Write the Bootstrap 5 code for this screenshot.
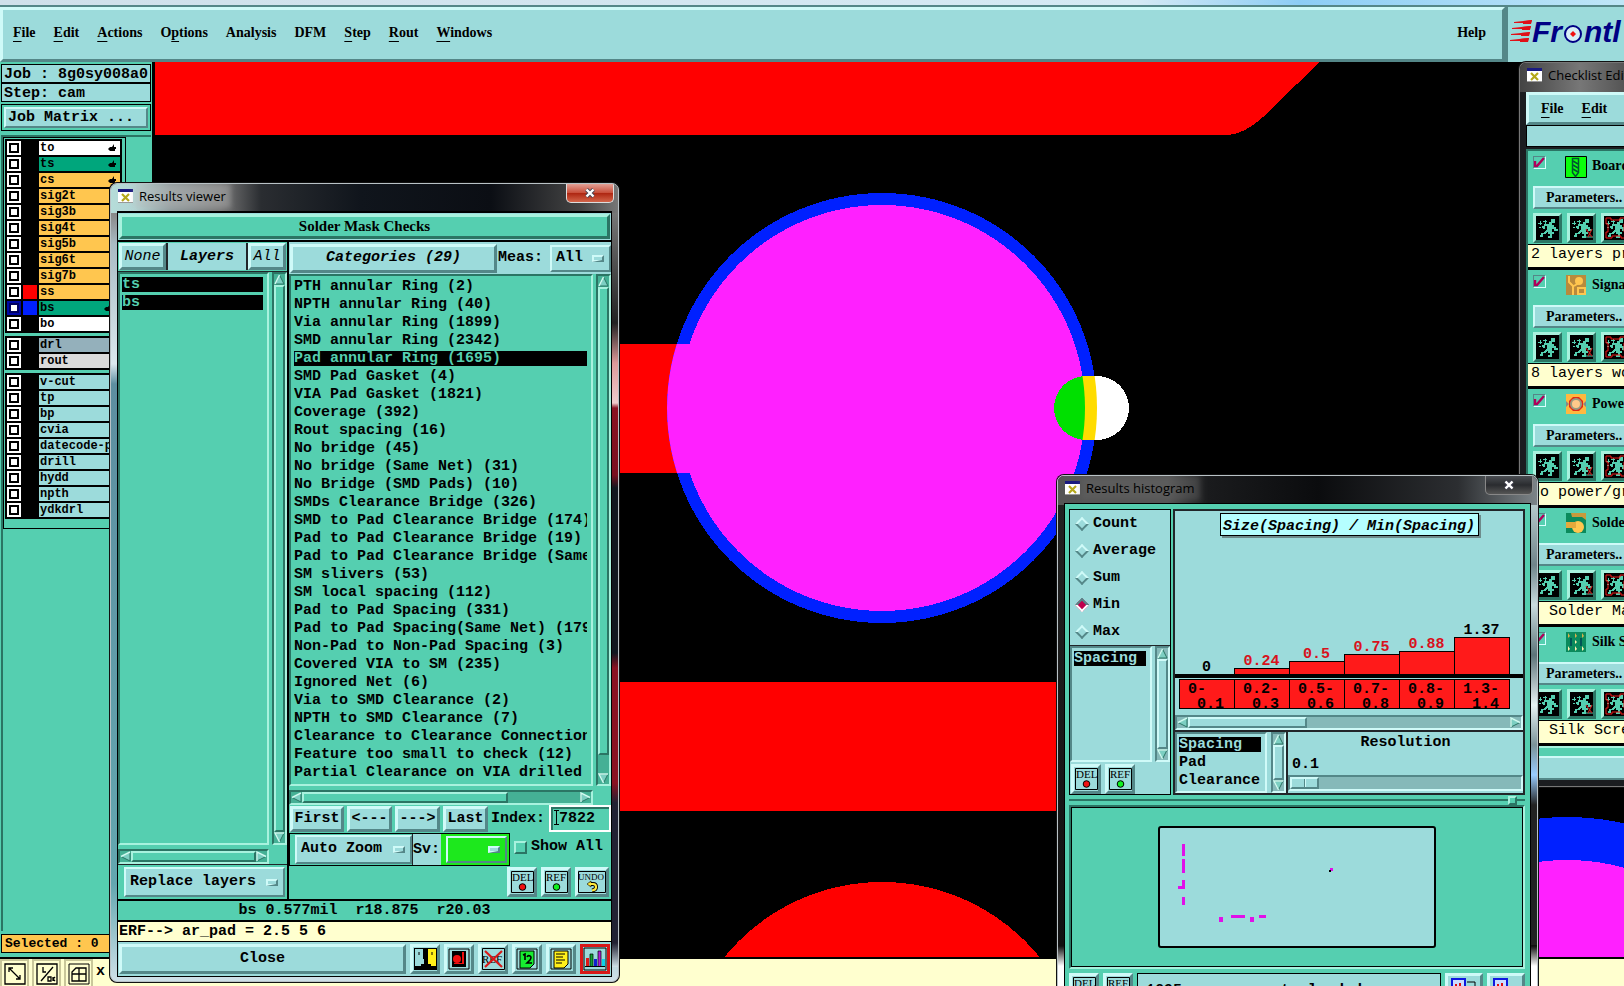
<!DOCTYPE html>
<html lang="en">
<head>
<meta charset="utf-8">
<title>CAM Graphic Editor</title>
<link rel="stylesheet" href="https://cdn.jsdelivr.net/npm/bootstrap@5.3.0/dist/css/bootstrap.min.css">
<script src="https://cdn.jsdelivr.net/npm/bootstrap@5.3.0/dist/js/bootstrap.bundle.min.js"></script>
<style>
:root{--teal:#55cfb0;--teal-l:#a8f2de;--teal-d:#2b7564;--aqua:#9cdbdb;--aqua-l:#cffaf8;--aqua-d:#548788;--cream:#ffffcf;--amber:#ffc64f}
body{font:bold 15px/18px "Liberation Mono",monospace;color:#000;background:#000}
ul{list-style:none;margin:0;padding:0}
button,select,input{font:inherit;color:inherit;border-radius:0;padding:0;margin:0}
a{color:inherit;text-decoration:none}
.serif{font:bold 14px/20px "Liberation Serif",serif}
.teal{background:var(--teal)} .aqua{background:var(--aqua)} .cream{background:var(--cream)}
.up{background:var(--aqua);border:3px solid;border-color:var(--aqua-l) var(--aqua-d) var(--aqua-d) var(--aqua-l)}
.up-thin{background:var(--aqua);border:2px solid;border-color:var(--aqua-l) var(--aqua-d) var(--aqua-d) var(--aqua-l)}
.up-teal{background:var(--teal);border:2px solid;border-color:var(--teal-l) var(--teal-d) var(--teal-d) var(--teal-l)}
.down-teal{background:var(--teal);border:2px solid;border-color:var(--teal-d) var(--teal-l) var(--teal-l) var(--teal-d)}
.down-aqua{background:var(--aqua);border:2px solid;border-color:var(--aqua-d) var(--aqua-l) var(--aqua-l) var(--aqua-d)}
.line{border:1px solid #000}
.mi{display:inline-block}
.mi::first-letter{text-decoration:underline;text-underline-offset:4px}
.menubar u{text-underline-offset:4px}
/* main bar */
.skybar{height:5px;background:linear-gradient(90deg,#cfe0ea,#d5eaf4 70%,#8ccdf5 80%,#bfe6f7)}
.topbar{height:57px;background:#dff7f5;border-top:2px solid var(--aqua-d)}
.menubar{gap:18px;padding:0 16px 3px 10px}
.logo-box{width:119px;padding:0 0 6px 2px;border-left:3px solid var(--aqua-d)}
.logo-text{font:italic bold 30px/30px "Liberation Sans",sans-serif;color:#000084}
/* side */
.side{width:154px;border-right:2px solid #000;padding:2px 1px 0}
.job{height:19px;padding-left:2px;line-height:19px;white-space:nowrap}
.matrix{height:27px;padding:2px;margin-top:2px}
.matrix button{padding-left:2px}
.layerarea{margin:4px 0 0;border-left:2px solid var(--teal-d);border-top:2px solid var(--teal-d)}
.layerframe{width:123px;padding:1px 3px 9px 1px;border:1px solid #000}
.grp{background:#000;padding:2px 2px 0;margin-bottom:3px}
.lrow{height:16px;padding-bottom:2px;font-size:12px;line-height:14px}
.lrow input{appearance:none;width:14px;height:14px;background:#fff;border:2px solid #fff;outline:0;box-shadow:inset 0 0 0 2px #000;flex:none}
.lrow input.on{border-color:#0008a8;box-shadow:inset 0 0 0 2px #000060}
.sw{width:14px;margin:0 2px;flex:none}
.lname{padding-left:1px;overflow:hidden;white-space:nowrap}
.c-w{background:#fff}.c-g{background:#00a67c}.c-o{background:var(--amber)}.c-d{background:#94b0bb}.c-r{background:#dadada}.c-a{background:var(--aqua)}
.sw-red{background:#f00}.sw-blue{background:#0020ff}
.selbox{height:19px;background:var(--amber);font-size:13px;line-height:17px;margin:3px 0 4px;padding-left:3px}
.footbar{height:29px;border-top:2px solid #000;gap:3px}
.fbtn{width:29px;height:29px;background:var(--cream);border:2px solid #c9c79a;padding:0}
/* windows */
.win{position:absolute;border:1px solid #b9c2c6;border-radius:7px;padding:0 6px 6px;overflow:hidden;box-shadow:0 0 0 1px #111}
.wtitle{height:27px;font:13px/24px "Open Sans",sans-serif;padding:0 0 3px 1px;gap:6px;white-space:nowrap}
.glow-l{background:#bbb6;box-shadow:0 0 5px 5px #bbb6;line-height:14px}
.glow-d{background:#6666;box-shadow:0 0 5px 5px #6666;line-height:14px}
.wclose{position:absolute;top:0;right:4px;width:48px;height:19px;border:1px solid #ddd;border-top:0;border-radius:0 0 5px 5px}
.wclose.hot{background:linear-gradient(#e3a095,#c9503c 48%,#ad2410 50%,#d3654a)}
.wclose.cold{background:linear-gradient(#4a4d52,#2a2c2f 50%,#555);border-color:#888}
.w-res{left:110px;top:183px;width:509px;height:799px;padding-bottom:4px;background:linear-gradient(180deg,transparent 30px,#a9bbc4 60px,#dbe8ee 180px,#5d8ea0 200px,#63a7b0 700px,#cfe0e8),#888}
.glass{position:absolute;left:0;right:0;top:0;height:29px}
.w-res .glass{background:linear-gradient(90deg,#b5dcd9 0,#b3d5d4 24px,#8f9a9c 60px,#777 110px,#2a2d31 150px,#10151c 250px,#0b0e14 380px,#444 470px,#777)}
.w-res .rside{position:absolute;right:0;top:29px;width:6px;bottom:14px;background:linear-gradient(180deg,#777,#222 110px,#d99 150px,#ecc 190px,#8a1322 195px,#7a1020 262px,#111820 275px,#111820 440px,#8a1322 455px,#8a1322 570px,#223 590px,#223 730px,#cfe0e8)}
.w-his{left:1057px;top:475px;width:481px;height:530px;background:linear-gradient(180deg,#222 0,#111 470px,#fff 490px)}
.w-his .glass{background:linear-gradient(90deg,#555,#555 110px,#1a1b1d 150px,#0b0c0e 260px,#2c2e31 400px,#7c8488)}
.w-his .rside{position:absolute;right:0;top:29px;width:6px;height:440px;background:linear-gradient(180deg,#b6cacb,#70848a 60px,#c9dcdf 100px,#5d7479 150px,#e8f2f4 200px,#7b9398 240px,#9cf 270px,#222 300px)}
.w-chk{left:1519px;top:62px;right:0;height:725px;background:#1b1d20;border-color:#777;border-right:0;border-radius:7px 0 0 0;padding-right:0}
.w-chk .glass{background:linear-gradient(90deg,#444,#777 60px,#555)}
.body-res{border:1px solid #000;border-top-width:2px}
.vhead{height:25px;border-width:3px;font-size:15px;line-height:18px}
.sbv{width:15px;border:2px solid;background:#45b095;border-color:var(--teal-d) var(--teal-l) var(--teal-l) var(--teal-d)}
.sbh{height:15px;border:2px solid;background:#45b095;border-color:var(--teal-d) var(--teal-l) var(--teal-l) var(--teal-d)}
.sbv.aq,.sbh.aq{background:#85b9b9;border-color:var(--aqua-d) var(--aqua-l) var(--aqua-l) var(--aqua-d)}
.aq .up-teal{background:var(--aqua);border-color:var(--aqua-l) var(--aqua-d) var(--aqua-d) var(--aqua-l)}
.cap{flex:none;width:11px;height:11px;display:block}
.catlist li,.laylist li{height:18px;white-space:pre;overflow:hidden;line-height:18px}
.catlist{padding:2px 4px 0 3px}
.laylist{padding:2px 4px 0 2px}
li.pick{color:var(--teal);background:linear-gradient(#000,#000) 0 1px/100% 15px no-repeat}
.aquapick li.pick{color:var(--aqua)}
.opt{appearance:none;background:var(--aqua) url("data:image/svg+xml,%3Csvg xmlns='http://www.w3.org/2000/svg' width='12' height='7'%3E%3Cpath d='M0 0h12v7H0z' fill='%23548788'/%3E%3Cpath d='M0 0h12l-2 2v3L0 7z' fill='%23cffaf8'/%3E%3Cpath d='M2 2h8v3H2z' fill='%239cdbdb'/%3E%3C/svg%3E") no-repeat right 5px center;border:2px solid;border-color:var(--aqua-l) var(--aqua-d) var(--aqua-d) var(--aqua-l);outline:0}
.opt.grn{background-color:#1de81d}
.svgreen{background:#1de81d;padding:2px 2px 2px 5px}
.ib{width:30px;height:30px;flex:none;display:flex;align-items:center;justify-content:center}
.ib svg{display:block;flex:none}
.ib text{font:11px "Liberation Serif",serif}
.tb{height:26px;white-space:nowrap;line-height:18px;flex:none;width:45px}
.idx{width:62px;height:27px;border:2px solid #fff;background:var(--teal);box-shadow:inset 2px 2px 0 var(--teal-d);padding-left:8px}
.showall{appearance:none;width:13px;height:13px}
/* histogram */
.rad{height:27px;gap:6px}
.rad input{appearance:none;width:10px;height:10px;margin:0 0 0 3px;transform:rotate(45deg);border:2px solid;border-color:var(--aqua-l) var(--aqua-d) var(--aqua-d) var(--aqua-l);background:var(--aqua)}
.rad input:checked{background:#c0004c;border-color:var(--aqua-d) #fff #fff var(--aqua-d)}
.hist{grid-template-columns:repeat(6,1fr);margin:0 14px 0 4px}
.bar{background:#ff1a1a;border:1px solid #000;border-bottom:0;margin-right:-1px}
.rng{background:#ff1a1a;border:1px solid #000;margin-right:-1px;height:30px;padding:2px 0 0 8px;line-height:15px;white-space:pre}
.val{text-align:center;line-height:10px;padding-bottom:1px}
.base{height:4px;background:#000;margin-bottom:1px}
.red{color:#d8121c}
.hint{width:259px;height:23px;margin:2px auto 0;background:#b5ffff;border:1px solid #000;box-shadow:2px 2px 0 #6e8c8c;font-style:italic;text-align:center;line-height:25px;white-space:nowrap}
.sld{appearance:none;display:block;width:100%;height:16px;background:#85b9b9;border:2px solid;border-color:var(--aqua-d) var(--aqua-l) var(--aqua-l) var(--aqua-d)}
.sld::-webkit-slider-thumb{appearance:none;width:29px;height:12px;background:linear-gradient(90deg,transparent 12px,#548788 12px 13px,#cffaf8 13px 14px,transparent 14px),var(--aqua);border:2px solid;border-color:var(--aqua-l) var(--aqua-d) var(--aqua-d) var(--aqua-l)}
.sash{height:10px}
.sash div:not(.up-teal){height:2px;background:#2b7564}
.sash .up-teal{width:9px;height:9px}
/* checklist */
.cmenu{height:33px;gap:18px;padding-left:12px;border-right:0;margin-top:2px}
.clist{margin-top:2px}
.sec{height:119px;border-bottom:3px solid #000;padding-left:5px;overflow:hidden}
.shead{height:35px;padding-top:5px}
.shead svg{margin:0 5px 0 19px;flex:none}
.shead label{white-space:nowrap}
.tick{appearance:none;width:13px;height:13px;flex:none;border:1px solid;border-color:var(--aqua-d) #d9ffff #d9ffff var(--aqua-d);background:url("data:image/svg+xml,%3Csvg xmlns='http://www.w3.org/2000/svg' width='11' height='11'%3E%3Cpath d='M1 4v5h2L10 1' fill='none' stroke='%23b0005a' stroke-width='2.4'/%3E%3C/svg%3E") no-repeat center}
.par{height:23px;width:100%;border-right:0;padding-left:11px;text-align:left;line-height:18px;display:block;white-space:nowrap;overflow:hidden}
.runs{gap:5px;padding:4px 0 1px}
.run{width:29px;height:30px;flex:none;border:3px solid;border-color:var(--teal-l) var(--teal-d) var(--teal-d) var(--teal-l);background:#000;padding:0;display:flex;align-items:center;justify-content:center}
.note{height:23px;border-top:1px solid #000;background:var(--cream);font:normal 15px/20px "Liberation Mono",monospace;padding-left:3px;margin-left:-5px;white-space:pre}
</style>
</head>
<body class="vh-100 overflow-hidden position-relative d-flex flex-column">
<svg width="0" height="0" class="position-absolute">
  <symbol id="x-app" viewBox="0 0 15 14"><path d="M0 0h15v14H0z" fill="#fff"/><path d="M0 0h15v3H0z" fill="#1a1a80"/><path d="M4 5l7 7M11 5l-7 7" stroke="#b5a81c" stroke-width="2.2"/><path d="M0 13.500h15" stroke="#999"/></symbol>
  <symbol id="x-close" viewBox="0 0 12 10"><path d="M2.500 1.500l7 7M9.500 1.500l-7 7" stroke="#445" stroke-width="4"/><path d="M2.500 1.500l7 7M9.500 1.500l-7 7" stroke="#fff" stroke-width="2.400"/></symbol>
  <symbol id="a-up" viewBox="0 0 11 11"><path d="M5.500 1L1 10h9z" fill="#7ccfc2" stroke="#2b7564"/><path d="M5.500 1L1 10" stroke="#cffaf0" stroke-width="1.500"/></symbol>
  <symbol id="a-dn" viewBox="0 0 11 11"><path d="M5.500 10L1 1h9z" fill="#7ccfc2" stroke="#2b7564"/><path d="M10 1H1l4.500 9" stroke="#cffaf0" stroke-width="1.500" fill="none"/></symbol>
  <symbol id="a-lt" viewBox="0 0 11 11"><path d="M1 5.500L10 1v9z" fill="#7ccfc2" stroke="#2b7564"/><path d="M1 5.500L10 1" stroke="#cffaf0" stroke-width="1.500"/></symbol>
  <symbol id="a-rt" viewBox="0 0 11 11"><path d="M10 5.500L1 1v9z" fill="#7ccfc2" stroke="#2b7564"/><path d="M1 10V1l9 4.500" stroke="#cffaf0" stroke-width="1.500" fill="none"/></symbol>
  <symbol id="hand" viewBox="0 0 8 8"><path d="M0 5l2-2h2l2-3v3h2v2H7v2H2z"/></symbol>
  <symbol id="runner" viewBox="0 0 22 22" shape-rendering="crispEdges"><path d="M0 0h22v22H0z"/><path d="M14 2h4v4h-3v2h2v2h2v2h2v2h-4v-2h-2v3h2v2h-2v4h-4v-2h2v-2h-2v-3l-3 3H6v3H3v-2h1v-2h3l3-4V9H8v3H6v-1H5V9h2V7h5V5h2z" fill="#55cfb0"/><path d="M1 6h4M3 4v4M6 4.500h4M8 3v4M2 10h2" stroke="#55cfb0" fill="none"/></symbol>
  <symbol id="runner-x" viewBox="0 0 22 22"><use href="#runner"/><path d="M14 20h8" stroke="#55cfb0"/><path d="M15 12l6 8M21 12l-4 8" stroke="#c02020" stroke-width="1.200"/></symbol>
  <symbol id="runner-f" viewBox="0 0 22 22"><use href="#runner"/><path d="M1 1h5v2h9V1h6v6h-2v8h2v6h-5v-2H7v2H1v-6h2V7H1z" stroke="#f01818" fill="none"/></symbol>
  <symbol id="drill" viewBox="0 0 22 22"><path d="M.5.500h21v21H.5z" fill="#0cff0c" stroke="#000"/><path d="M7.500 2.500h6v14l-3 4-3-4z" fill="none" stroke="#053" stroke-width="1.500"/><path d="M8 5l5 3M8 9l5 3M8 13l5 3" stroke="#053" stroke-width="1.500"/></symbol>
</svg>

<div class="skybar flex-shrink-0"></div>
<header class="topbar d-flex flex-shrink-0">
  <nav class="menubar up serif d-flex align-items-center flex-grow-1">
    <a class="mi" href="#">File</a><a class="mi" href="#">Edit</a><a class="mi" href="#">Actions</a><a href="#">O<u>p</u>tions</a><a href="#">Analysis</a><a href="#">DFM</a><a class="mi" href="#">Step</a><a class="mi" href="#">Rout</a><a class="mi" href="#">Windows</a><a class="ms-auto" href="#">Help</a>
  </nav>
  <div class="logo-box aqua d-flex align-items-center overflow-hidden">
    <svg class="flex-shrink-0" width="22" height="24" viewBox="0 0 22 24"><path d="M22 0L4 2v1h17zM21 6L2 8v1h18zM20 12L1 14v1h18zM19 18L0 20v1h18z" fill="#e01018"/><path d="M22 0l-9 1v3h8zM21 6l-9 1v3h8zM20 12l-9 1v3h8zM19 18l-9 1v3h8z" fill="#e01018"/></svg><span class="logo-text">Fr</span><svg class="flex-shrink-0" width="22" height="22" viewBox="0 0 22 22"><circle cx="11" cy="13" r="8" fill="#d7eef5" stroke="#000084" stroke-width="2"/><path d="M11 10l3 3-3 3-3-3z" fill="#f01010"/></svg><span class="logo-text">ntl</span>
  </div>
</header>

<main class="d-flex flex-grow-1">
  <aside class="side teal d-flex flex-column flex-shrink-0">
    <div class="line aqua job">Job : 8g0sy008a0</div>
    <div class="line aqua job">Step: cam</div>
    <div class="line matrix"><button class="up-thin w-100 h-100 text-start d-block">Job Matrix ...</button></div>
    <div class="layerarea flex-grow-1">
      <div class="layerframe">
        <div class="grp">
          <label class="lrow d-flex"><input type="checkbox"><span class="sw"></span><span class="lname c-w flex-grow-1 d-flex justify-content-between align-items-center">to<svg width="8" height="8" class="me-1"><use href="#hand"/></svg></span></label>
          <label class="lrow d-flex"><input type="checkbox"><span class="sw"></span><span class="lname c-g flex-grow-1 d-flex justify-content-between align-items-center">ts<svg width="8" height="8" class="me-1"><use href="#hand"/></svg></span></label>
          <label class="lrow d-flex"><input type="checkbox"><span class="sw"></span><span class="lname c-o flex-grow-1 d-flex justify-content-between align-items-center">cs<svg width="8" height="8" class="me-1"><use href="#hand"/></svg></span></label>
          <label class="lrow d-flex"><input type="checkbox"><span class="sw"></span><span class="lname c-o flex-grow-1">sig2t</span></label>
          <label class="lrow d-flex"><input type="checkbox"><span class="sw"></span><span class="lname c-o flex-grow-1">sig3b</span></label>
          <label class="lrow d-flex"><input type="checkbox"><span class="sw"></span><span class="lname c-o flex-grow-1">sig4t</span></label>
          <label class="lrow d-flex"><input type="checkbox"><span class="sw"></span><span class="lname c-o flex-grow-1">sig5b</span></label>
          <label class="lrow d-flex"><input type="checkbox"><span class="sw"></span><span class="lname c-o flex-grow-1">sig6t</span></label>
          <label class="lrow d-flex"><input type="checkbox"><span class="sw"></span><span class="lname c-o flex-grow-1">sig7b</span></label>
          <label class="lrow d-flex"><input type="checkbox"><span class="sw sw-red"></span><span class="lname c-o flex-grow-1">ss</span></label>
          <label class="lrow d-flex"><input type="checkbox" class="on" checked><span class="sw sw-blue"></span><span class="lname c-g flex-grow-1 d-flex justify-content-between align-items-center">bs<svg width="8" height="8" class="me-2"><use href="#hand"/></svg></span></label>
          <label class="lrow d-flex"><input type="checkbox"><span class="sw"></span><span class="lname c-w flex-grow-1">bo</span></label>
        </div>
        <div class="grp">
          <label class="lrow d-flex"><input type="checkbox"><span class="sw"></span><span class="lname c-d flex-grow-1">drl</span></label>
          <label class="lrow d-flex"><input type="checkbox"><span class="sw"></span><span class="lname c-r flex-grow-1">rout</span></label>
        </div>
        <div class="grp mb-0">
          <label class="lrow d-flex"><input type="checkbox"><span class="sw"></span><span class="lname c-a flex-grow-1">v-cut</span></label>
          <label class="lrow d-flex"><input type="checkbox"><span class="sw"></span><span class="lname c-a flex-grow-1">tp</span></label>
          <label class="lrow d-flex"><input type="checkbox"><span class="sw"></span><span class="lname c-a flex-grow-1">bp</span></label>
          <label class="lrow d-flex"><input type="checkbox"><span class="sw"></span><span class="lname c-a flex-grow-1">cvia</span></label>
          <label class="lrow d-flex"><input type="checkbox"><span class="sw"></span><span class="lname c-a flex-grow-1">datecode-p</span></label>
          <label class="lrow d-flex"><input type="checkbox"><span class="sw"></span><span class="lname c-a flex-grow-1">drill</span></label>
          <label class="lrow d-flex"><input type="checkbox"><span class="sw"></span><span class="lname c-a flex-grow-1">hydd</span></label>
          <label class="lrow d-flex"><input type="checkbox"><span class="sw"></span><span class="lname c-a flex-grow-1">npth</span></label>
          <label class="lrow d-flex"><input type="checkbox"><span class="sw"></span><span class="lname c-a flex-grow-1">ydkdrl</span></label>
        </div>
      </div>
    </div>
    <div class="line selbox">Selected : 0</div>
  </aside>
  <div class="flex-grow-1 position-relative overflow-hidden">
    <svg class="position-absolute top-0 start-0 w-100 h-100" viewBox="154 62 1470 895" preserveAspectRatio="xMinYMin slice" shape-rendering="crispEdges">
      <path d="M155 62H1320L1274 106C1262 119 1245 135 1226 135H155z" fill="#f00"/>
      <path d="M155 344H882V473H155zM155 682H1200V811H155z" fill="#f00"/>
      <circle cx="882" cy="408" r="215" fill="#0020ff"/>
      <circle cx="882" cy="408" r="203" fill="#ff20ff"/>
      <clipPath id="ring"><circle cx="882" cy="408" r="215"/></clipPath>
      <clipPath id="pad"><circle cx="882" cy="408" r="203"/></clipPath>
      <path d="M660 344H720V473H660z" fill="#ff20ff" clip-path="url(#ring)"/>
      <rect x="1054" y="376" width="75" height="64" rx="32" fill="#fff"/>
      <rect x="1054" y="376" width="75" height="64" rx="32" fill="#ffdc00" clip-path="url(#ring)"/>
      <rect x="1054" y="376" width="75" height="64" rx="32" fill="#00e000" clip-path="url(#pad)"/>
      <circle cx="882" cy="1085" r="203" fill="#f00"/>
      <circle cx="1567" cy="1075" r="258" fill="#0020ff"/>
      <circle cx="1567" cy="1075" r="215" fill="#ff20ff"/>
    </svg>
  </div>
</main>
<footer class="footbar cream d-flex flex-shrink-0">
  <button class="fbtn" aria-label="Zoom area"><svg width="22" height="22" viewBox="0 0 22 22"><path d="M1 1h20v20H1zM5 5l11 11M5 9V5h4M16 12v4h-4" fill="none" stroke="#000" stroke-width="1.300"/></svg></button>
  <button class="fbtn" aria-label="Snap"><svg width="22" height="22" viewBox="0 0 22 22"><path d="M1 1h20v20H1zM5 18L17 4M7 4v5h3M12 14h3v4h-3zM17 14v4M19 14l-2 2 2 2" fill="none" stroke="#000" stroke-width="1.300"/></svg></button>
  <button class="fbtn teal" aria-label="Grid"><svg width="22" height="22" viewBox="0 0 22 22"><path d="M1 1h20v20H1z" fill="#ffffcf" stroke="#000"/><path d="M4 9l4-4h10v13H4zM4 11h14M11 5v13" fill="none" stroke="#000" stroke-width="1.300"/></svg></button>
  <span class="pt-1">x</span>
</footer>

<!-- Checklist editor -->
<section class="win w-chk d-flex flex-column">
  <div class="glass"></div>
  <div class="wtitle d-flex align-items-center position-relative flex-shrink-0"><svg class="flex-shrink-0" width="15" height="14"><use href="#x-app"/></svg><span>Checklist Edit</span></div>
  <nav class="up cmenu serif d-flex align-items-center flex-shrink-0"><a class="mi" href="#">File</a><a class="mi" href="#">Edit</a></nav>
  <div class="line aqua flex-shrink-0 border-end-0 pt-3 pb-1"></div>
  <div class="down-teal aqua clist flex-shrink-0 serif border-end-0">
    <div class="sec"><div class="d-flex shead"><input class="tick" id="s1" type="checkbox" checked><svg width="22" height="22"><use href="#drill"/></svg><label for="s1">Board</label></div><button class="up-thin par">Parameters..</button><div class="d-flex runs"><button class="run" aria-label="Run"><svg width="22" height="22"><use href="#runner"/></svg></button><button class="run" aria-label="Run selected"><svg width="22" height="22"><use href="#runner-x"/></svg></button><button class="run" aria-label="Run profile"><svg width="22" height="22"><use href="#runner-f"/></svg></button></div><div class="note">2 layers pr</div></div>
    <div class="sec"><div class="d-flex shead"><input class="tick" id="s2" type="checkbox" checked><svg width="22" height="22" viewBox="-1 0 22 22"><path d="M0 0h20v20H0z" fill="#b98a3c"/><circle cx="13" cy="6" r="4" fill="#ffc64f"/><path d="M3 1v6l4 4v9M8 11l6-4M12 13h7v6h-7z" stroke="#ffc64f" stroke-width="2" fill="none"/></svg><label for="s2">Signal</label></div><button class="up-thin par">Parameters..</button><div class="d-flex runs"><button class="run" aria-label="Run"><svg width="22" height="22"><use href="#runner"/></svg></button><button class="run" aria-label="Run selected"><svg width="22" height="22"><use href="#runner-x"/></svg></button><button class="run" aria-label="Run profile"><svg width="22" height="22"><use href="#runner-f"/></svg></button></div><div class="note">8 layers wo</div></div>
    <div class="sec"><div class="d-flex shead"><input class="tick" id="s3" type="checkbox" checked><svg width="22" height="22" viewBox="-1 0 22 22"><path d="M0 0h20v20H0z" fill="#ffb83f"/><path d="M7 3h6l4 4v6l-4 4H7l-4-4V7z" fill="#e02818"/><circle cx="10" cy="10" r="5" fill="#ffc98a" stroke="#9a9a80" stroke-width="2"/><path d="M0 7l3 3-3 3M20 7l-3 3 3 3" fill="#888"/></svg><label for="s3">Power</label></div><button class="up-thin par">Parameters..</button><div class="d-flex runs"><button class="run" aria-label="Run"><svg width="22" height="22"><use href="#runner"/></svg></button><button class="run" aria-label="Run selected"><svg width="22" height="22"><use href="#runner-x"/></svg></button><button class="run" aria-label="Run profile"><svg width="22" height="22"><use href="#runner-f"/></svg></button></div><div class="note">No power/gr</div></div>
    <div class="sec"><div class="d-flex shead"><input class="tick" id="s4" type="checkbox" checked><svg width="22" height="22" viewBox="-1 0 22 22"><path d="M0 0h20v20H0z" fill="#0b8a5c"/><path d="M5 0h15v7l-4-3H6z" fill="#c79a3c"/><circle cx="12" cy="14" r="6" fill="#ffc64f"/><path d="M0 9h10v6H0z" fill="#e5a93c"/></svg><label for="s4">Solder</label></div><button class="up-thin par">Parameters..</button><div class="d-flex runs"><button class="run" aria-label="Run"><svg width="22" height="22"><use href="#runner"/></svg></button><button class="run" aria-label="Run selected"><svg width="22" height="22"><use href="#runner-x"/></svg></button><button class="run" aria-label="Run profile"><svg width="22" height="22"><use href="#runner-f"/></svg></button></div><div class="note">  Solder Ma</div></div>
    <div class="sec"><div class="d-flex shead"><input class="tick" id="s5" type="checkbox" checked><svg width="22" height="22" viewBox="-1 0 22 22"><path d="M0 0h20v20H0z" fill="#0b8a5c"/><path d="M2 1l2 3-2 2M9 1l2 3-2 2M16 1l2 3-2 2" fill="#d8b04c"/><path d="M2 14l2 3-2 2M9 14l2 3-2 2M16 14l2 3-2 2M9 8l2 2-2 2" fill="#fff2b0"/><path d="M5 6v8M15 6v8" stroke="#055" stroke-width="2"/></svg><label for="s5">Silk S</label></div><button class="up-thin par">Parameters..</button><div class="d-flex runs"><button class="run" aria-label="Run"><svg width="22" height="22"><use href="#runner"/></svg></button><button class="run" aria-label="Run selected"><svg width="22" height="22"><use href="#runner-x"/></svg></button><button class="run" aria-label="Run profile"><svg width="22" height="22"><use href="#runner-f"/></svg></button></div><div class="note">  Silk Scre</div></div>
  </div>
  <div class="teal flex-grow-1 pt-2"><div class="up-thin h-100 border-end-0"></div></div>
</section>

<!-- Results histogram -->
<section class="win w-his d-flex flex-column">
  <div class="glass"></div><div class="rside"></div>
  <div class="wtitle d-flex align-items-center position-relative flex-shrink-0"><svg width="15" height="14"><use href="#x-app"/></svg><span class="glow-d">Results histogram</span></div>
  <button class="wclose cold" aria-label="Close window"><svg width="12" height="10" class="d-block mx-auto"><use href="#x-close"/></svg></button>
  <div class="teal flex-grow-1 position-relative line d-flex flex-column" style="padding:5px 5px 0 4px">
    <div class="d-flex" style="gap:2px;height:286px">
      <div class="aqua line d-flex flex-column flex-shrink-0" style="width:102px">
        <div class="border-bottom border-dark">
          <label class="rad d-flex align-items-center ps-1"><input type="radio" name="m">Count</label>
          <label class="rad d-flex align-items-center ps-1"><input type="radio" name="m">Average</label>
          <label class="rad d-flex align-items-center ps-1"><input type="radio" name="m">Sum</label>
          <label class="rad d-flex align-items-center ps-1"><input type="radio" name="m" checked>Min</label>
          <label class="rad d-flex align-items-center ps-1"><input type="radio" name="m">Max</label>
        </div>
        <div class="d-flex flex-grow-1 justify-content-between">
          <ul class="down-aqua laylist aquapick" style="width:82px"><li class="pick">Spacing</li></ul>
          <div class="sbv aq d-flex flex-column"><svg class="cap"><use href="#a-up"/></svg><div class="up-teal flex-grow-1"></div><svg class="cap"><use href="#a-dn"/></svg></div>
        </div>
        <div class="d-flex gap-1" style="padding:2px 1px 0"><button class="up ib" aria-label="Delete"><svg width="23" height="22" viewBox="0 0 23 22"><path d="M.5.500h22v21H.5z" fill="none" stroke="#000"/><text x="1" y="10">DEL</text><circle cx="11.500" cy="16" r="3.300" fill="#f01010" stroke="#000"/></svg></button><button class="up ib" aria-label="Reference"><svg width="23" height="22" viewBox="0 0 23 22"><path d="M.5.500h22v21H.5z" fill="none" stroke="#000"/><text x="1" y="10">REF</text><circle cx="11.500" cy="16" r="3.300" fill="#10f020" stroke="#000"/></svg></button></div>
      </div>
      <div class="flex-grow-1 aqua border border-2 border-dark d-flex flex-column" style="width:0">
        <div class="hint">Size(Spacing) / Min(Spacing)</div>
        <div class="hist d-grid align-items-end flex-grow-1">
          <div class="val">0</div>
          <div><div class="val red">0.24</div><div class="bar" style="height:6px"></div></div>
          <div><div class="val red">0.5</div><div class="bar" style="height:13px"></div></div>
          <div><div class="val red">0.75</div><div class="bar" style="height:20px"></div></div>
          <div><div class="val red">0.88</div><div class="bar" style="height:23px"></div></div>
          <div><div class="val">1.37</div><div class="bar" style="height:37px"></div></div>
        </div>
        <div class="base"></div>
        <div class="hist d-grid">
          <div class="rng">0-
 0.1</div><div class="rng">0.2-
 0.3</div><div class="rng">0.5-
 0.6</div><div class="rng">0.7-
 0.8</div><div class="rng">0.8-
 0.9</div><div class="rng">1.3-
 1.4</div>
        </div>
        <div class="sbh aq d-flex" style="margin-top:6px"><svg class="cap"><use href="#a-lt"/></svg><div class="up-teal" style="width:119px"></div><svg class="cap ms-auto"><use href="#a-rt"/></svg></div>
        <div class="d-flex border-top border-dark" style="height:63px">
          <ul class="down-aqua laylist aquapick" style="width:92px"><li class="pick">Spacing</li><li>Pad</li><li>Clearance</li></ul>
          <div class="sbv aq d-flex flex-column ms-1"><svg class="cap"><use href="#a-up"/></svg><div class="up-teal flex-grow-1"></div><svg class="cap"><use href="#a-dn"/></svg></div>
          <div class="flex-grow-1 border-start border-dark"><label for="res" class="d-block text-center lh-base" style="height:20px">Resolution</label><div class="ps-1 pt-1" style="height:23px">0.1</div><input id="res" type="range" class="sld" value="0"></div>
        </div>
      </div>
    </div>
    <div class="sash d-flex align-items-center"><div class="flex-grow-1"></div><div class="up-teal"></div><div class="ps-2"></div></div>
    <div class="down-teal flex-shrink-0" style="height:164px"><div class="line h-100 d-flex justify-content-center align-items-center">
      <svg width="278" height="122" viewBox="0 0 278 122"><rect x="1" y="1" width="276" height="120" rx="2" fill="#9cdbdb" stroke="#000" stroke-width="2"/><path d="M24 18h3v12h-3zM24 33h3v14h-3zM24 54h3v9h-7v-3h4zM24 71h3v8h-3zM61 91h4v5h-4zM73 89h14v3H73zM92 91h4v5h-4zM101 89h7v3h-7zM172 42h3v3h-3z" fill="#e010e8"/><path d="M171 44h2v2h-2z"/></svg>
    </div></div>
    <div class="d-flex gap-1 pt-1">
      <button class="up ib" aria-label="Delete"><svg width="23" height="22" viewBox="0 0 23 22"><path d="M.5.500h22v21H.5z" fill="none" stroke="#000"/><text x="1" y="10">DEL</text></svg></button><button class="up ib" aria-label="Reference"><svg width="23" height="22" viewBox="0 0 23 22"><path d="M.5.500h22v21H.5z" fill="none" stroke="#000"/><text x="1" y="10">REF</text></svg></button>
      <div class="line aqua flex-grow-1 ps-2 pt-2">1695 measurements loaded</div>
      <button class="up ib" style="width:38px" aria-label="Previous"><svg width="28" height="22" viewBox="0 0 28 22"><path d="M2 2h13v13H2z" fill="#cdf" stroke="#1018e0" stroke-width="2"/><path d="M6 12V7M10 12V6" stroke="#e01010" stroke-width="2"/><path d="M17 5h8v10" fill="none" stroke="#000"/></svg></button><button class="up ib" style="width:38px" aria-label="Next"><svg width="28" height="22" viewBox="0 0 28 22"><path d="M2 2h13v13H2z" fill="#cdf" stroke="#1018e0" stroke-width="2"/><path d="M6 12V7M10 12V6" stroke="#e01010" stroke-width="2"/></svg></button>
    </div>
  </div>
</section>

<!-- Results viewer -->
<section class="win w-res d-flex flex-column">
  <div class="glass"></div><div class="rside"></div>
  <div class="wtitle d-flex align-items-center position-relative flex-shrink-0"><svg width="15" height="14"><use href="#x-app"/></svg><span class="glow-l">Results viewer</span></div>
  <button class="wclose hot" aria-label="Close window"><svg width="12" height="10" class="d-block mx-auto"><use href="#x-close"/></svg></button>
  <div class="body-res flex-grow-1 d-flex flex-column teal position-relative">
    <div class="aqua" style="padding:1px;border-bottom:2px solid #000"><h1 class="up-teal serif vhead text-center m-0">Solder Mask Checks</h1></div>
    <div class="d-flex flex-grow-1" style="min-height:0">
      <div class="d-flex flex-column flex-shrink-0" style="width:171px;border-right:2px solid #000">
        <div class="d-flex border-bottom border-dark fst-italic" style="height:30px;padding:1px">
          <button class="up fw-normal" style="width:47px">None</button><div class="aqua border-start border-end border-2 border-dark flex-grow-1 text-center" style="line-height:28px">Layers</div><button class="up fw-normal" style="width:38px">All</button>
        </div>
        <div class="d-flex flex-grow-1 justify-content-between"><ul class="down-teal laylist" style="width:151px"><li class="pick">ts</li><li class="pick">bs</li></ul>
          <div class="sbv d-flex flex-column"><svg class="cap"><use href="#a-up"/></svg><div class="up-teal flex-grow-1"></div><svg class="cap"><use href="#a-dn"/></svg></div></div>
        <div class="sbh d-flex" style="width:151px;margin:4px 0 0"><svg class="cap"><use href="#a-lt"/></svg><div class="up-teal flex-grow-1"></div><svg class="cap"><use href="#a-rt"/></svg></div>
        <div class="border-top border-dark" style="padding:2px 2px 2px 6px"><select class="opt w-100 ps-1 d-block" style="height:30px" aria-label="Layer action"><option>Replace layers</option></select></div>
      </div>
      <div class="d-flex flex-column flex-grow-1" style="width:0">
        <div class="d-flex aqua align-items-center" style="height:32px"><button class="up fst-italic" style="width:207px;height:29px;margin:0 1px">Categories (29)</button><label for="meas">Meas:</label><select id="meas" class="opt ms-auto ps-1" style="width:61px;height:27px"><option>All</option></select></div>
        <div class="d-flex flex-grow-1 justify-content-between" style="min-height:0">
          <ul class="down-teal catlist overflow-hidden" style="width:304px"><li>PTH annular Ring (2)</li><li>NPTH annular Ring (40)</li><li>Via annular Ring (1899)</li><li>SMD annular Ring (2342)</li><li class="pick">Pad annular Ring (1695)</li><li>SMD Pad Gasket (4)</li><li>VIA Pad Gasket (1821)</li><li>Coverage (392)</li><li>Rout spacing (16)</li><li>No bridge (45)</li><li>No bridge (Same Net) (31)</li><li>No Bridge (SMD Pads) (10)</li><li>SMDs Clearance Bridge (326)</li><li>SMD to Pad Clearance Bridge (174)</li><li>Pad to Pad Clearance Bridge (19)</li><li>Pad to Pad Clearance Bridge (Same</li><li>SM slivers (53)</li><li>SM local spacing (112)</li><li>Pad to Pad Spacing (331)</li><li>Pad to Pad Spacing(Same Net) (179</li><li>Non-Pad to Non-Pad Spacing (3)</li><li>Covered VIA to SM (235)</li><li>Ignored Net (6)</li><li>Via to SMD Clearance (2)</li><li>NPTH to SMD Clearance (7)</li><li>Clearance to Clearance Connection</li><li>Feature too small to check (12)</li><li>Partial Clearance on VIA drilled</li></ul>
          <div class="sbv d-flex flex-column"><svg class="cap"><use href="#a-up"/></svg><div class="up-teal flex-grow-1" style="margin-bottom:18px"></div><svg class="cap"><use href="#a-dn"/></svg></div>
        </div>
        <div class="sbh d-flex" style="width:304px;margin-top:4px"><svg class="cap"><use href="#a-lt"/></svg><div class="up-teal" style="width:206px"></div><svg class="cap ms-auto"><use href="#a-rt"/></svg></div>
        <div class="d-flex align-items-center" style="height:27px;gap:3px;padding-left:1px"><button class="up tb" style="width:54px">First</button><button class="up tb">&lt;---</button><button class="up tb">---&gt;</button><button class="up tb">Last</button><label for="idx" class="text-nowrap">Index:</label><span class="position-relative ms-auto"><input id="idx" class="idx d-block" value="7822"><svg class="position-absolute" style="left:5px;top:5px" width="5" height="15" viewBox="0 0 5 15"><path d="M0 .5h5M0 14.500h5M2.500 0v15" stroke="#000" fill="none"/></svg></span></div>
        <div class="d-flex align-items-center" style="height:34px">
          <div class="line d-flex" style="height:33px;width:221px;padding-left:5px"><select class="opt ps-1" style="width:117px;margin:1px 0" aria-label="Zoom mode"><option>Auto Zoom</option></select><label for="sv" class="aqua border-start border-dark" style="line-height:31px;width:29px;flex:none">Sv:</label><div class="svgreen flex-grow-1"><select id="sv" class="opt grn w-100 h-100 d-block"><option></option></select></div></div>
          <label class="d-flex align-items-center gap-1 ps-1 pb-1 text-nowrap"><input type="checkbox" class="up-teal showall">Show All</label>
        </div>
        <div class="d-flex justify-content-end gap-1" style="height:33px;padding:1px 2px"><button class="up ib" aria-label="Delete"><svg width="23" height="22" viewBox="0 0 23 22"><path d="M.5.500h22v21H.5z" fill="none" stroke="#000"/><text x="1" y="10">DEL</text><circle cx="11.500" cy="16" r="3.300" fill="#f01010" stroke="#000"/></svg></button><button class="up ib" aria-label="Reference"><svg width="23" height="22" viewBox="0 0 23 22"><path d="M.5.500h22v21H.5z" fill="none" stroke="#000"/><text x="1" y="10">REF</text><circle cx="11.500" cy="16" r="3.300" fill="#10f020" stroke="#000"/></svg></button><button class="up ib" style="width:34px" aria-label="Undo"><svg width="28" height="22" viewBox="0 0 28 22"><path d="M.5.500h27v21H.5z" fill="none" stroke="#000"/><text x="0" y="9" style="font-size:9px">UNDO</text><path d="M11 13h4q3 0 3 3t-4 3.500" fill="none" stroke="#000" stroke-width="4"/><path d="M9 13l4-3v6z" fill="#ffe83c" stroke="#000" stroke-width=".6"/><path d="M11 13h4q3 0 3 3t-4 3.500" fill="none" stroke="#ffe83c" stroke-width="2.200"/></svg></button></div>
      </div>
    </div>
    <div class="text-center" style="height:21px;border-top:2px solid #000;white-space:pre;line-height:20px">bs 0.577mil  r18.875  r20.03</div>
    <div class="cream text-nowrap" style="height:22px;border:solid #000;border-width:2px 0 1px;padding-left:1px;line-height:20px">ERF--&gt; ar_pad = 2.5 5 6</div>
    <div class="aqua d-flex" style="padding:2px 1px;gap:4px"><button class="up flex-grow-1" style="height:30px">Close</button>
      <button class="up ib" aria-label="Contrast"><svg width="23" height="22" viewBox="0 0 23 22"><path d="M0 0h23v22H0z"/><path d="M1 1h8v10h1v5H7v2H1z" fill="#9cdbdb"/><path d="M14 1h8v17h-5v-2h-3z" fill="#fff01a"/><path d="M5 4v3M18 4v3" stroke="#000"/></svg></button>
      <button class="up ib" aria-label="Stop"><svg width="22" height="22" viewBox="0 0 22 22"><path d="M1 1h20v20H1z" fill="none" stroke="#000"/><path d="M4 3h14v16H4z"/><circle cx="9" cy="11" r="4" fill="#f01010"/><path d="M14 4h2v12H6v-1h8z" fill="#f01010"/></svg></button>
      <button class="up ib" aria-label="Clear reference"><svg width="23" height="22" viewBox="0 0 23 22"><path d="M.5.500h22v21H.5z" fill="none" stroke="#000"/><text x="0" y="15">REF</text><path d="M3 3l17 16M20 3L3 19" stroke="#d81818" stroke-width="2.200"/></svg></button>
      <button class="up ib" aria-label="Numbered page"><svg width="22" height="22" viewBox="0 0 22 22"><path d="M1 1h20v20H1z" fill="none" stroke="#000"/><path d="M4 3h14v13l-4 4H4z" fill="#16ee30" stroke="#000"/><path d="M7 7l2-1v6M11 9q1-2 3-1t0 4l-3 3h5" stroke="#000" stroke-width="1.600" fill="none"/></svg></button>
      <button class="up ib" aria-label="Notes"><svg width="22" height="22" viewBox="0 0 22 22"><path d="M1 1h20v20H1z" fill="none" stroke="#000"/><path d="M4 3h14v13l-4 4H4z" fill="#fff01a" stroke="#000"/><path d="M6 6h9M6 9h7M6 12h9M6 15h6" stroke="#000"/></svg></button>
      <button class="up ib" aria-label="Histogram" style="border-color:#d81818"><svg width="24" height="24" viewBox="0 0 24 24"><path d="M1 1h22v22H1z" fill="#9cdbdb" stroke="#000"/><path d="M3 11h3v8H3z" fill="#e01818"/><path d="M7 7h3v12H7z" fill="#10a030"/><path d="M11 12h3v7h-3z" fill="#1020d0"/><path d="M15 4h3v15h-3z" fill="#b020d0"/><path d="M19 12h3v7h-3z" fill="#10d0e8"/><path d="M2 19.500h20" stroke="#000"/><path d="M7 19V7h3v12M15 19V4h3v15" fill="none" stroke="#000" stroke-width=".7"/></svg></button>
    </div>
  </div>
</section>
</body>
</html>
